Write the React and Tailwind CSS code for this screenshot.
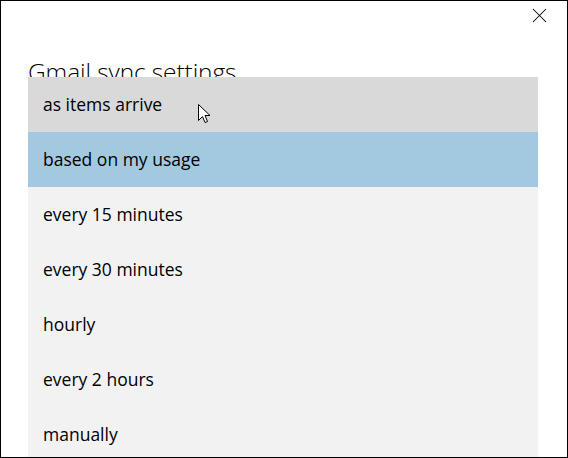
import { X } from "lucide-react";

const options = [
  { label: "as items arrive", state: "hover" },
  { label: "based on my usage", state: "selected" },
  { label: "every 15 minutes" },
  { label: "every 30 minutes" },
  { label: "hourly" },
  { label: "every 2 hours" },
  { label: "manually" },
];

function Cursor() {
  return (
    <svg width="13" height="21" viewBox="0 0 13 21" className="absolute left-[170px] top-[27px]">
      <path
        d="M0.5 0.5 L0.5 16.5 L4.5 12.5 L7 18.5 L9.5 17.5 L7 11.5 L12 11.5 Z"
        fill="#fff"
        stroke="#000"
        strokeWidth="1"
        strokeLinejoin="miter"
      />
    </svg>
  );
}

export default function App() {
  return (
    <div className="w-[568px] h-[458px] bg-white border border-black relative overflow-hidden font-['Open_Sans',sans-serif] text-black">
      {/* title bar */}
      <div className="flex justify-end pt-[2px] pr-[15px]">
        <X size={25} strokeWidth={1} className="text-black" />
      </div>

      <div className="px-[27px] pt-[28px]">
        <h1 className="text-[24.5px] font-light leading-[32px] tracking-[-0.1px]">Gmail sync settings</h1>
      </div>

      {/* dropdown popup */}
      <div className="absolute left-[27px] top-[76px] w-[510px] bg-[#f2f2f2]">
        {options.map((o) => (
          <div
            key={o.label}
            className={
              "relative h-[55px] flex items-center pl-[15px] text-[17.5px] " +
              (o.state === "hover"
                ? "bg-[#d9d9d9]"
                : o.state === "selected"
                ? "bg-[#a3c9e1]"
                : "bg-[#f2f2f2]")
            }
          >
            <span className="-mt-[1px]">{o.label}</span>
            {o.state === "hover" && <Cursor />}
          </div>
        ))}
      </div>
    </div>
  );
}
